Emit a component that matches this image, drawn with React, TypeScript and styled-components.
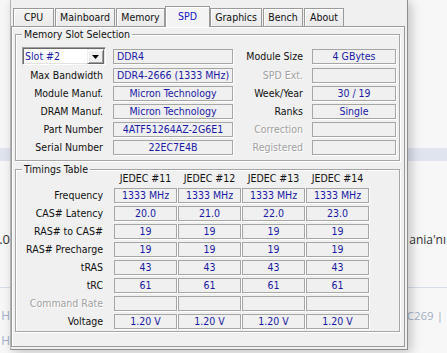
import React from 'react';
import styled, { createGlobalStyle } from 'styled-components';

const GlobalStyle = createGlobalStyle`
  html, body {
    margin: 0;
    padding: 0;
  }
  body {
    background: #f7f7f7;
  }
  * {
    box-sizing: border-box;
  }
`;

const Page = styled.div`
  position: relative;
  width: 447px;
  height: 353px;
  overflow: hidden;
  background: #f7f7f7;
  padding-top: 148px;
  font-family: 'Open Sans', 'Noto Sans', sans-serif;
`;

const Band = styled.div`
  height: 13px;
  background: #dfe4ef;
`;

const PageRow = styled.div<{ gap: number }>`
  display: grid;
  grid-template-columns: 10px 398px 39px;
  height: 16px;
  margin-top: ${({ gap }) => gap}px;
  align-items: center;
  white-space: nowrap;
`;

const PageCell = styled.div<{ muted?: boolean; size: number; endPad?: number }>`
  font-size: ${({ size }) => size}px;
  color: ${({ muted }) => (muted ? '#a3afc6' : '#333')};
  text-align: right;
  padding-right: ${({ endPad }) => endPad ?? 0}px;
  direction: rtl;
`;

const PageRule = styled.div<{ gap: number }>`
  height: 1px;
  margin-top: ${({ gap }) => gap}px;
  background: #d6dce8;
`;

const Window = styled.div`
  position: absolute;
  left: 10px;
  top: 0;
  width: 398px;
  height: 350px;
  padding: 6px 2px 2px 0;
  background: #f0f0f0;
  border: 1px solid #8e8e8e;
  border-top: none;
  border-left-color: #b4b4b4;
  box-shadow: 3px 2px 10px rgba(0, 0, 0, 0.22);
  font-family: 'DejaVu Sans Condensed', 'DejaVu Sans', sans-serif;
  font-stretch: condensed;
  font-size: 10.5px;
  color: #111;
  display: flex;
  flex-direction: column;
`;

const TabBar = styled.div`
  display: flex;
  align-items: flex-end;
  gap: 1px;
  height: 20px;
  margin-left: 2px;
`;

const Tab = styled.div<{ active?: boolean; w: number }>`
  position: relative;
  width: ${({ w }) => w}px;
  height: ${({ active }) => (active ? 21 : 18)}px;
  margin: ${({ active }) => (active ? '0 -1px -1px -1px' : '0')};
  z-index: ${({ active }) => (active ? 2 : 0)};
  border: 1px solid #9a9a9a;
  border-bottom: none;
  background: ${({ active }) =>
    active ? '#f4f4f4' : 'linear-gradient(#f3f3f3, #ebebeb)'};
  box-shadow: inset 1px 1px 0 #fff;
  color: ${({ active }) => (active ? '#1414c8' : '#111')};
  text-align: center;
  line-height: ${({ active }) => (active ? 19 : 16)}px;
  white-space: nowrap;
`;

const Panel = styled.div`
  flex: 1;
  border: 1px solid #9a9a9a;
  box-shadow: inset 1px 1px 0 #fff;
  padding: 7px 4px 0 3px;
  display: flex;
  flex-direction: column;
  gap: 8px;
`;

const GroupBox = styled.div<{ padTop: number; padBottom: number }>`
  position: relative;
  border: 1px solid #a6a6a6;
  box-shadow: inset 1px 1px 0 #fff, 1px 1px 0 #fff;
  padding: ${({ padTop, padBottom }) => `${padTop}px 0 ${padBottom}px 0`};
`;

const Legend = styled.span`
  position: absolute;
  top: -7px;
  left: 6px;
  padding: 0 2px;
  line-height: 13px;
  background: #f0f0f0;
`;

const SlotGrid = styled.div`
  display: grid;
  grid-template-columns: 97px 120px 79px 84px;
  grid-template-rows: 18px repeat(5, 15px);
  row-gap: 3px;
  align-items: center;
`;

const TimingGrid = styled.div`
  display: grid;
  grid-template-columns: 97px repeat(4, 63px);
  grid-template-rows: 14px repeat(8, 15px);
  column-gap: 1px;
  row-gap: 3px;
  align-items: center;
`;

const Label = styled.div<{ pad: number; disabled?: boolean }>`
  text-align: right;
  padding-right: ${({ pad }) => pad}px;
  white-space: nowrap;
  line-height: 13px;
  color: ${({ disabled }) => (disabled ? '#a2a2a2' : '#111')};
  text-shadow: ${({ disabled }) => (disabled ? '1px 1px 0 #fff' : 'none')};
`;

const ColHead = styled.div`
  text-align: center;
  line-height: 13px;
  white-space: nowrap;
`;

const Field = styled.div<{ left?: boolean }>`
  height: 15px;
  border: 1px solid #a6a6a6;
  box-shadow: 1px 1px 0 #fff;
  color: #1a1aa6;
  line-height: 13px;
  text-align: ${({ left }) => (left ? 'left' : 'center')};
  padding-left: ${({ left }) => (left ? 3 : 0)}px;
  white-space: nowrap;
  overflow: hidden;
`;

const Combo = styled.div`
  display: flex;
  width: 84px;
  height: 18px;
  margin-left: 6px;
  background: #fff;
  border: 1px solid;
  border-color: #a0a0a0 #fff #fff #a0a0a0;
  box-shadow: inset 1px 1px 0 #696969, inset -1px -1px 0 #e3e3e3;
  padding: 1px 1px 1px 2px;
`;

const ComboText = styled.div`
  flex: 1;
  color: #1a1aa6;
  line-height: 15px;
`;

const ComboButton = styled.div`
  width: 17px;
  height: 15px;
  background: #f0f0f0;
  border: 1px solid;
  border-color: #f0f0f0 #696969 #696969 #f0f0f0;
  box-shadow: inset 1px 1px 0 #fff, inset -1px -1px 0 #a0a0a0;
  display: flex;
  align-items: center;
  justify-content: center;
`;

const tabs = [
  { label: 'CPU', w: 41 },
  { label: 'Mainboard', w: 60 },
  { label: 'Memory', w: 49 },
  { label: 'SPD', w: 45, active: true },
  { label: 'Graphics', w: 52 },
  { label: 'Bench', w: 40 },
  { label: 'About', w: 40 },
];

const slotRows = [
  { label: 'Max Bandwidth', value: 'DDR4-2666 (1333 MHz)', side: 'SPD Ext.', sideValue: '', off: true },
  { label: 'Module Manuf.', value: 'Micron Technology', side: 'Week/Year', sideValue: '30 / 19' },
  { label: 'DRAM Manuf.', value: 'Micron Technology', side: 'Ranks', sideValue: 'Single' },
  { label: 'Part Number', value: '4ATF51264AZ-2G6E1', side: 'Correction', sideValue: '', off: true },
  { label: 'Serial Number', value: '22EC7E4B', side: 'Registered', sideValue: '', off: true },
];

const jedec = ['JEDEC #11', 'JEDEC #12', 'JEDEC #13', 'JEDEC #14'];

const timingRows: { label: string; values: string[]; off?: boolean }[] = [
  { label: 'Frequency', values: ['1333 MHz', '1333 MHz', '1333 MHz', '1333 MHz'] },
  { label: 'CAS# Latency', values: ['20.0', '21.0', '22.0', '23.0'] },
  { label: 'RAS# to CAS#', values: ['19', '19', '19', '19'] },
  { label: 'RAS# Precharge', values: ['19', '19', '19', '19'] },
  { label: 'tRAS', values: ['43', '43', '43', '43'] },
  { label: 'tRC', values: ['61', '61', '61', '61'] },
  { label: 'Command Rate', values: ['', '', '', ''], off: true },
  { label: 'Voltage', values: ['1.20 V', '1.20 V', '1.20 V', '1.20 V'] },
];

const App: React.FC = () => {
  return (
    <>
      <GlobalStyle />
      <Page>
        <Band />
        <PageRow gap={69}>
          <PageCell size={13}>0.</PageCell>
          <div />
          <PageCell size={12} endPad={1}>
            <bdi>ania'nı</bdi>
          </PageCell>
        </PageRow>
        <PageRule gap={41} />
        <PageRow gap={19}>
          <PageCell muted size={12}>H</PageCell>
          <div />
          <PageCell muted size={11.5} endPad={4}>
            <bdi>LC269 |</bdi>
          </PageCell>
        </PageRow>
        <PageRow gap={9}>
          <PageCell muted size={12}>H</PageCell>
          <div />
          <div />
        </PageRow>

        <Window>
          <TabBar>
            {tabs.map((t) => (
              <Tab key={t.label} w={t.w} active={t.active}>
                {t.label}
              </Tab>
            ))}
          </TabBar>
          <Panel>
            <GroupBox padTop={12} padBottom={5}>
              <Legend>Memory Slot Selection</Legend>
              <SlotGrid>
                <Combo>
                  <ComboText>Slot #2</ComboText>
                  <ComboButton>
                    <svg width="7" height="4" viewBox="0 0 7 4">
                      <path d="M0 0h7L3.5 4z" fill="#000" />
                    </svg>
                  </ComboButton>
                </Combo>
                <Field left>DDR4</Field>
                <Label pad={9}>Module Size</Label>
                <Field>4 GBytes</Field>
                {slotRows.map((r) => (
                  <React.Fragment key={r.label}>
                    <Label pad={10}>{r.label}</Label>
                    <Field>{r.value}</Field>
                    <Label pad={9} disabled={r.off}>
                      {r.side}
                    </Label>
                    <Field>{r.sideValue}</Field>
                  </React.Fragment>
                ))}
              </SlotGrid>
            </GroupBox>

            <GroupBox padTop={1} padBottom={2}>
              <Legend>Timings Table</Legend>
              <TimingGrid>
                <div />
                {jedec.map((j) => (
                  <ColHead key={j}>{j}</ColHead>
                ))}
                {timingRows.map((r) => (
                  <React.Fragment key={r.label}>
                    <Label pad={10} disabled={r.off}>
                      {r.label}
                    </Label>
                    {r.values.map((v, i) => (
                      <Field key={i}>{v}</Field>
                    ))}
                  </React.Fragment>
                ))}
              </TimingGrid>
            </GroupBox>
          </Panel>
        </Window>
      </Page>
    </>
  );
};

export default App;
